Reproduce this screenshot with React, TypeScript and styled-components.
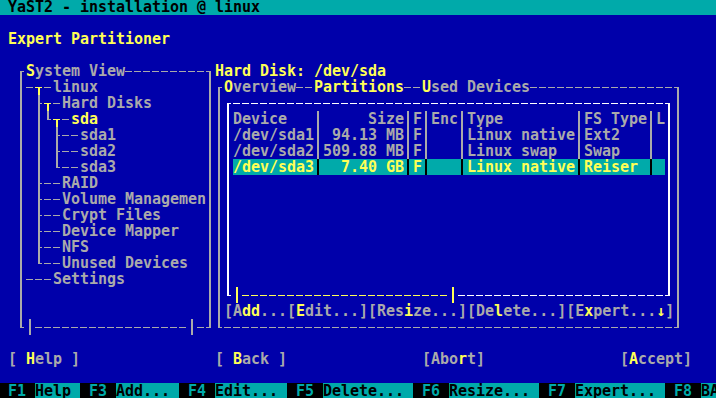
import React from "react";
import styled, { createGlobalStyle } from "styled-components";

const BLUE = "#0000aa";
const CYAN = "#00aaaa";
const GRAY = "#aaaaaa";
const YELLOW = "#ffff55";
const WHITE = "#ffffff";
const BLACK = "#000000";

// one text cell of the console is 9x16
const CW = 9;

const dashes = (c: string) => `linear-gradient(to right, ${c} 7px, transparent 7px)`;
const solid = (c: string) => `linear-gradient(${c}, ${c})`;

const GlobalStyle = createGlobalStyle`
  html, body {
    margin: 0;
    padding: 0;
    background: ${BLUE};
    overflow: hidden;
  }
  #root {
    width: 716px;
    height: 398px;
    overflow: hidden;
  }
`;

const Screen = styled.div`
  width: 720px;
  height: 400px;
  margin: -1px 0 0 -1px;
  display: grid;
  grid-template-columns: repeat(80, ${CW}px);
  grid-template-rows: repeat(25, 16px);
  background: ${BLUE};
  color: ${GRAY};
  font-family: "DejaVu Sans Mono", "Liberation Mono", monospace;
  font-size: 15px;
  font-weight: 700;
  line-height: 16px;
  letter-spacing: -0.03px;
  white-space: pre;
`;

const TitleBar = styled.div`
  grid-row: 1;
  grid-column: 1 / -1;
  background: ${CYAN};
  color: ${BLACK};
  padding-left: ${CW}px;
`;

const Heading = styled.div`
  grid-row: 3;
  grid-column: 2 / span 30;
  color: ${YELLOW};
`;

const DiskLabel = styled.div`
  grid-row: 5;
  grid-column: 25 / span 30;
  color: ${YELLOW};
`;

// frame lines run through the middle of the border cells
const Frame = styled.div<{ $line: string }>`
  position: relative;
  display: flex;
  flex-direction: column;
  &::before {
    content: "";
    position: absolute;
    top: 8px;
    bottom: 7px;
    left: 3px;
    right: 4px;
    background:
      ${(p) => dashes(p.$line)} -3px 0 / 9px 1px repeat-x,
      ${(p) => dashes(p.$line)} -3px 100% / 9px 1px repeat-x;
  }
  &::after {
    content: "";
    position: absolute;
    top: 8px;
    bottom: 7px;
    left: 3px;
    right: 4px;
    border-left: 2px solid ${(p) => p.$line};
    border-right: 2px solid ${(p) => p.$line};
  }
  > * {
    position: relative;
    z-index: 1;
  }
`;

const SystemFrame = styled(Frame)`
  grid-row: 5 / span 17;
  grid-column: 3 / span 22;
`;

const TabFrame = styled(Frame)`
  grid-row: 6 / span 16;
  grid-column: 25 / span 52;
`;

const TableBox = styled(Frame)`
  flex: none;
  margin-left: ${CW}px;
  width: ${50 * CW}px;
  height: ${13 * 16}px;
`;

const FrameTitle = styled.div`
  display: flex;
  gap: ${2 * CW}px;
  height: 16px;
  padding-left: ${CW}px;
`;

const Caption = styled.span<{ $c?: string }>`
  background: ${BLUE};
  color: ${(p) => p.$c || GRAY};
`;

const Hot = styled.span`
  color: ${YELLOW};
`;

const TreeRow = styled.div`
  display: flex;
  height: 16px;
  padding-left: ${CW}px;
`;

const Twig = styled.span<{ $u?: boolean; $d?: boolean; $l?: boolean; $r?: boolean; $c: string }>`
  position: relative;
  flex: none;
  width: ${CW}px;
  height: 16px;
  &::before {
    content: "";
    display: ${(p) => (p.$u || p.$d ? "block" : "none")};
    position: absolute;
    left: 3px;
    width: 2px;
    top: ${(p) => (p.$u ? 0 : 8)}px;
    bottom: ${(p) => (p.$d ? 0 : 7)}px;
    background: ${(p) => p.$c};
  }
  &::after {
    content: "";
    display: ${(p) => (p.$l || p.$r ? "block" : "none")};
    position: absolute;
    top: 8px;
    height: 1px;
    left: ${(p) => (p.$l ? 0 : 3)}px;
    right: ${(p) => (p.$r ? 2 : 4)}px;
    background: ${(p) => p.$c};
  }
`;

const TreeLabel = styled.span<{ $active?: boolean }>`
  color: ${(p) => (p.$active ? YELLOW : GRAY)};
`;

const ScrollRow = styled.div`
  height: 16px;
  margin-top: auto;
`;

const Thumb = styled.div<{ $from: number; $cells: number; $c: string }>`
  height: 16px;
  margin-left: ${(p) => p.$from * CW}px;
  width: ${(p) => p.$cells * CW}px;
  background: ${(p) => `
    ${solid(p.$c)} 3px 0 / 2px 16px no-repeat,
    ${solid(p.$c)} ${(p.$cells - 1) * CW + 3}px 0 / 2px 16px no-repeat,
    ${solid(BLUE)} 0 0 / 9px 16px no-repeat,
    ${solid(BLUE)} ${(p.$cells - 1) * CW}px 0 / 9px 16px no-repeat,
    ${dashes(p.$c)} 0 8px / 9px 1px repeat-x`};
`;

const TopEdge = styled.div`
  height: 16px;
`;

const Table = styled.div`
  display: flex;
  flex-direction: column;
  margin-left: ${CW}px;
  width: ${48 * CW}px;
`;

const TRow = styled.div<{ $sel?: boolean }>`
  display: grid;
  grid-template-columns: 81px 9px 81px 9px 9px 9px 27px 9px 108px 9px 63px 9px 9px;
  height: 16px;
  background: ${(p) => (p.$sel ? CYAN : "transparent")};
  color: ${(p) => (p.$sel ? YELLOW : GRAY)};
`;

const Cell = styled.span<{ $right?: boolean }>`
  overflow: hidden;
  text-align: ${(p) => (p.$right ? "right" : "left")};
`;

const Sep = styled.span<{ $sel?: boolean }>`
  position: relative;
  &::before {
    content: "";
    position: absolute;
    left: 3px;
    width: 2px;
    top: 0;
    bottom: 0;
    background: ${(p) => (p.$sel ? BLACK : GRAY)};
  }
`;

const ActionRow = styled.div`
  height: 16px;
  padding-left: ${CW}px;
`;

const DialogButton = styled.span<{ $col: number }>`
  grid-row: 23;
  grid-column: ${(p) => p.$col + 1} / span 10;
`;

const FKeyBar = styled.div`
  grid-row: 25;
  grid-column: 1 / -1;
  display: flex;
  overflow: hidden;
`;

const FKey = styled.span`
  flex: none;
  width: ${4 * CW}px;
  background: ${BLACK};
  color: ${CYAN};
`;

const FLabel = styled.span<{ $cells: number }>`
  flex: none;
  width: ${(p) => p.$cells * CW}px;
  overflow: hidden;
  background: ${CYAN};
  color: ${BLACK};
`;

// "{x}" marks the hotkey letters
const hot = (text: string) =>
  text.split(/(\{[^}]*\})/).map((part, i) =>
    part.startsWith("{") ? <Hot key={i}>{part.slice(1, -1)}</Hot> : <span key={i}>{part}</span>
  );

const twigs: Record<string, { u?: boolean; d?: boolean; l?: boolean; r?: boolean }> = {
  "─": { l: true, r: true },
  T: { l: true, r: true, d: true },
  "├": { u: true, d: true, r: true },
  "│": { u: true, d: true },
  "└": { u: true, r: true },
  " ": {},
};

const tree = [
  { lines: "─T─", label: "linux" },
  { lines: " ├T─", label: "Hard Disks" },
  { lines: " │└T─", label: "sda", active: true },
  { lines: " │ ├──", label: "sda1" },
  { lines: " │ ├──", label: "sda2" },
  { lines: " │ └──", label: "sda3" },
  { lines: " ├──", label: "RAID" },
  { lines: " ├──", label: "Volume Managemen" },
  { lines: " ├──", label: "Crypt Files" },
  { lines: " ├──", label: "Device Mapper" },
  { lines: " ├──", label: "NFS" },
  { lines: " └──", label: "Unused Devices" },
  { lines: "───", label: "Settings" },
];

const partitions = [
  ["/dev/sda1", "94.13 MB", "F", "", "Linux native", "Ext2", ""],
  ["/dev/sda2", "509.88 MB", "F", "", "Linux swap", "Swap", ""],
  ["/dev/sda3", "7.40 GB", "F", "", "Linux native", "Reiser", ""],
];

const fkeys: [string, string, number][] = [
  ["F1", "Help", 5],
  ["F3", "Add...", 7],
  ["F4", "Edit...", 8],
  ["F5", "Delete...", 10],
  ["F6", "Resize...", 10],
  ["F7", "Expert...", 10],
  ["F8", "BACK", 2],
];

const PartRow: React.FC<{ cells: string[]; sel?: boolean }> = ({ cells, sel }) => (
  <TRow $sel={sel}>
    <Cell>{cells[0]}</Cell>
    <Sep $sel={sel} />
    <Cell $right>{cells[1]}</Cell>
    <Sep $sel={sel} />
    <Cell>{cells[2]}</Cell>
    <Sep $sel={sel} />
    <Cell>{cells[3]}</Cell>
    <Sep $sel={sel} />
    <Cell>{cells[4]}</Cell>
    <Sep $sel={sel} />
    <Cell>{cells[5]}</Cell>
    <Sep $sel={sel} />
    <Cell>{cells[6]}</Cell>
  </TRow>
);

export default function App() {
  return (
    <>
      <GlobalStyle />
      <Screen>
        <TitleBar>YaST2 - installation @ linux</TitleBar>
        <Heading>Expert Partitioner</Heading>

        <SystemFrame $line={GRAY}>
          <FrameTitle>
            <Caption>{hot("{S}ystem View")}</Caption>
          </FrameTitle>
          {tree.map((node) => (
            <TreeRow key={node.label}>
              {Array.from(node.lines).map((ch, i) => {
                const t = twigs[ch];
                return (
                  <Twig key={i} $u={t.u} $d={t.d} $l={t.l} $r={t.r} $c={ch === "T" ? YELLOW : GRAY} />
                );
              })}
              <TreeLabel $active={node.active}>{node.label}</TreeLabel>
            </TreeRow>
          ))}
          <ScrollRow>
            <Thumb $from={1} $cells={19} $c={GRAY} />
          </ScrollRow>
        </SystemFrame>

        <DiskLabel>Hard Disk: /dev/sda</DiskLabel>

        <TabFrame $line={GRAY}>
          <FrameTitle>
            <Caption>{hot("{O}verview")}</Caption>
            <Caption $c={YELLOW}>Partitions</Caption>
            <Caption>{hot("{U}sed Devices")}</Caption>
          </FrameTitle>
          <TableBox $line={WHITE}>
            <TopEdge />
            <Table>
              <PartRow cells={["Device", "Size", "F", "Enc", "Type", "FS Type", "L"]} />
              {partitions.map((row, i) => (
                <PartRow key={row[0]} cells={row} sel={i === 2} />
              ))}
            </Table>
            <ScrollRow>
              <Thumb $from={1} $cells={25} $c={YELLOW} />
            </ScrollRow>
          </TableBox>
          <ActionRow>
            {hot("[A{dd}...[{E}dit...][Res{i}ze...][De{l}ete...][E{x}pert...{↓}]")}
          </ActionRow>
        </TabFrame>

        <DialogButton $col={1}>{hot("[ {H}elp ]")}</DialogButton>
        <DialogButton $col={24}>{hot("[ {B}ack ]")}</DialogButton>
        <DialogButton $col={47}>{hot("[Abo{r}t]")}</DialogButton>
        <DialogButton $col={69}>{hot("[{A}ccept]")}</DialogButton>

        <FKeyBar>
          {fkeys.map(([key, label, cells]) => (
            <React.Fragment key={key}>
              <FKey> {key} </FKey>
              <FLabel $cells={cells}>{label}</FLabel>
            </React.Fragment>
          ))}
        </FKeyBar>
      </Screen>
    </>
  );
}
